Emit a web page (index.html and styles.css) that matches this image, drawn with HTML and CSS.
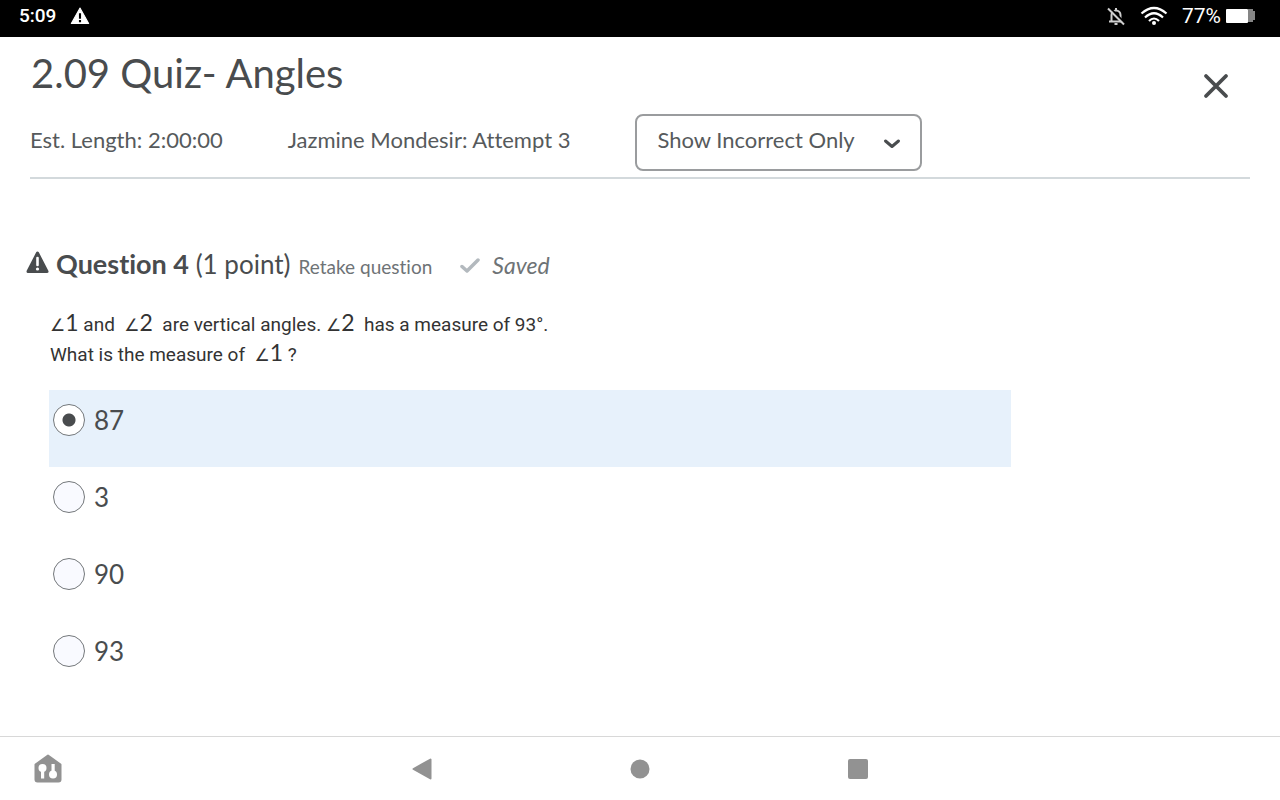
FILE: index.html
```html
<!DOCTYPE html>
<html lang="en">
<head>
<meta charset="utf-8">
<meta name="viewport" content="width=device-width, initial-scale=1">
<title>2.09 Quiz- Angles</title>
<link rel="stylesheet" href="styles.css">
</head>
<body>
<div class="status-bar">
  <div class="status-group">
    <span>5:09</span>
    <svg class="status-alert" width="20" height="18" viewBox="0 0 18 17" aria-hidden="true"><path d="M9 1 17.2 15.5H.8Z" fill="#fff" stroke="#fff" stroke-linejoin="round"/><path d="M9 6v5M9 12.300v2" stroke="#000" stroke-width="2"/></svg>
  </div>
  <div class="status-group status-right">
    <svg width="20" height="20" viewBox="0 0 20 20" fill="none" stroke="#cfcfcf" stroke-width="2" aria-hidden="true"><path d="M5.500 15V9a4.500 4.500 0 0 1 9 0v6M3 15.500h14M10 2v3M8.500 18h3"/><path d="M3.500 1.500 19 17" stroke="#000"/><path d="M2 2.500 18 18.500"/></svg>
    <svg class="wifi" width="28" height="20" viewBox="0 0 28 20" fill="none" stroke="#fff" stroke-width="2.200" aria-hidden="true"><path d="M1.500 7.500Q14-3.500 26.500 7.500M5 11.500Q14 3 23 11.500M9 15Q14 10 19 15"/><circle cx="14" cy="17" r="2" fill="#fff" stroke="none"/></svg>
    <span class="charge">77%</span>
    <svg class="battery" width="30" height="16" viewBox="0 0 30 16" aria-hidden="true"><path d="M22 1h5v2h2v9h-2v2h-5Z" fill="#858585"/><rect y="1" width="22" height="14" rx="1" fill="#fff"/></svg>
  </div>
</div>

<main class="page">
  <header class="quiz-header">
    <div class="title-row">
      <h1 class="title">2.09 Quiz- Angles</h1>
      <button class="close" type="button" aria-label="Close"><svg width="28" height="28" viewBox="0 0 28 28" aria-hidden="true"><path d="M4 4 24 24M24 4 4 24" stroke="#494c4e" stroke-width="3.800" stroke-linecap="round"/></svg></button>
    </div>
    <div class="meta">
      <span>Est. Length: 2:00:00</span>
      <span>Jazmine Mondesir: Attempt 3</span>
      <div class="filter">
        <select class="filter-select" aria-label="Questions shown"><option>Show Incorrect Only</option></select>
        <svg class="chevron" width="18" height="12" viewBox="0 0 18 12" fill="none" aria-hidden="true"><path d="M2.500 3 9 8.500 15.500 3" stroke="#494c4e" stroke-width="3" stroke-linecap="round" stroke-linejoin="round"/></svg>
      </div>
    </div>
  </header>

  <section class="question">
    <div class="question-head">
      <svg class="question-alert" width="23" height="23" viewBox="0 0 23 23" aria-hidden="true"><path d="M11.500 2 21 20.500H2Z" fill="#494c4e" stroke="#494c4e" stroke-width="3" stroke-linejoin="round"/><path d="M11.500 7v7" stroke="#fff" stroke-width="2.600" stroke-linecap="round"/><circle cx="11.500" cy="18" r="1.600" fill="#fff"/></svg>
      <h2 class="question-title"><strong>Question 4</strong> (1 point)</h2>
      <span class="retake">Retake question</span>
      <svg class="check" width="20" height="16" viewBox="0 0 20 16" fill="none" aria-hidden="true"><path d="M2 8.500 7 13 18 2" stroke="#b3b9be" stroke-width="3.500" stroke-linecap="round" stroke-linejoin="round"/></svg>
      <em class="saved">Saved</em>
    </div>
    <p class="prompt"><span class="math"><span class="angle">∠</span>1</span> and&nbsp; <span class="math"><span class="angle">∠</span>2</span>&nbsp; are vertical angles. <span class="math"><span class="angle">∠</span>2</span>&nbsp; has a measure of 93°.<br>What is the measure of&nbsp; <span class="math"><span class="angle">∠</span>1</span> ?</p>
    <div class="answers" role="radiogroup" aria-label="Question 4">
      <label class="answer"><input class="radio" type="radio" name="q4" checked><span>87</span></label>
      <label class="answer"><input class="radio" type="radio" name="q4"><span>3</span></label>
      <label class="answer"><input class="radio" type="radio" name="q4"><span>90</span></label>
      <label class="answer"><input class="radio" type="radio" name="q4"><span>93</span></label>
    </div>
  </section>
</main>

<nav class="nav-bar" aria-label="System">
  <button class="nav-button nav-home" type="button" aria-label="Smart home"><svg width="28" height="30" viewBox="0 0 28 30" aria-hidden="true"><path d="M14 1.500 26.500 10.500v15q0 2-2 2h-21q-2 0-2-2v-15Z" fill="#929292" stroke="#929292" stroke-width="2" stroke-linejoin="round"/><g fill="#fff"><circle cx="8.500" cy="14" r="4"/><path d="M7 15h3.200v9.500H7ZM17.500 10h3.200v10h-3.200Z"/><circle cx="19" cy="20.500" r="4"/></g></svg></button>
  <button class="nav-button" type="button" aria-label="Back"><svg width="22" height="24" viewBox="0 0 22 24" aria-hidden="true"><path d="M2.500 12 19.500 2.500v19Z" fill="#929292" stroke="#929292" stroke-width="2" stroke-linejoin="round"/></svg></button>
  <button class="nav-button" type="button" aria-label="Home"><svg width="22" height="22" viewBox="0 0 22 22" aria-hidden="true"><circle cx="11" cy="11" r="9.500" fill="#929292"/></svg></button>
  <button class="nav-button" type="button" aria-label="Recent apps"><svg width="22" height="22" viewBox="0 0 22 22" aria-hidden="true"><rect x="1" y="1" width="20" height="20" rx="2" fill="#929292"/></svg></button>
</nav>
</body>
</html>
```
FILE: styles.css
```css
* {
  box-sizing: border-box;
}

body {
  margin: 0;
  min-height: 100vh;
  display: flex;
  flex-direction: column;
  background: #fff;
  color: #494c4e;
  font-family: Lato, "Liberation Sans", sans-serif;
  font-size: 22px;
  font-variant-ligatures: none;
}

button {
  border: 0;
  padding: 0;
  background: none;
  display: flex;
}

.status-bar {
  display: flex;
  justify-content: space-between;
  align-items: center;
  padding: 0 24px 5px 19px;
  min-height: 37px;
  background: #000;
  color: #fff;
  font: 500 19px/32px Roboto, sans-serif;
}

.status-group {
  display: flex;
  align-items: center;
  gap: 14px;
}

.charge {
  font-size: 21px;
  font-weight: 400;
}

.battery {
  margin-left: -9px;
}

.page {
  flex: 1;
  padding: 0 30px;
}

.quiz-header {
  border-bottom: 2px solid #d3d9dc;
  padding-bottom: 6px;
}

.title-row {
  display: flex;
  justify-content: space-between;
  align-items: flex-start;
  padding: 11px 20px 0 1px;
}

.title {
  margin: 0;
  font-size: 40px;
  line-height: 50px;
  font-weight: 400;
}

.close {
  margin-top: 24px;
}

.meta {
  display: flex;
  align-items: center;
  gap: 65px;
  margin-top: 14px;
  line-height: 30px;
  color: #565a5c;
}

.meta > span {
  padding-bottom: 5px;
}

.filter {
  position: relative;
}

.filter-select {
  appearance: none;
  height: 57px;
  padding: 0 65px 5px 20px;
  border: 2px solid #9a9c9e;
  border-radius: 8px;
  background: #fff;
  color: inherit;
  font: inherit;
  font-variant-ligatures: none;
}

.chevron {
  position: absolute;
  right: 21px;
  top: 24px;
  pointer-events: none;
}

.question {
  padding-top: 67px;
}

.question-head {
  display: flex;
  align-items: baseline;
  margin-left: -4px;
  line-height: 36px;
}

.question-title {
  margin: 0 8px 0 7px;
  font-size: 26px;
  font-weight: 400;
}

.question-title strong {
  font-size: 27px;
}

.retake {
  color: #6e7376;
  font-size: 19px;
}

.check {
  margin: 0 12px 0 28px;
}

.saved {
  color: #6e7376;
  font-size: 23px;
}

.prompt {
  margin: 25px 20px 20px;
  color: #333;
  font: 19px/30px Roboto, sans-serif;
}

.math {
  font: 23px/1 Lato, sans-serif;
}

.angle {
  font-family: "DejaVu Sans", sans-serif;
  font-size: 17px;
}

.answers {
  margin: 0 19px;
  max-width: 962px;
}

.answer {
  display: flex;
  align-items: flex-start;
  gap: 9px;
  min-height: 77px;
  padding: 14px 4px;
  font-size: 26px;
  line-height: 32px;
}

.answer:has(:checked) {
  background: #e7f1fb;
}

.radio {
  appearance: none;
  flex: none;
  width: 32px;
  height: 32px;
  margin: 0;
  border: 1px solid #74787b;
  border-radius: 50%;
  background: #f9faff;
}

.radio:checked {
  background: radial-gradient(circle, #494c4e 6px, #fff 7px);
}

.nav-bar {
  display: grid;
  grid-template-columns: 1fr 17% 17% 17% 1fr;
  align-items: center;
  justify-items: center;
  height: 64px;
  border-top: 1px solid #d8d8d8;
}

.nav-home {
  justify-self: start;
  margin-left: 34px;
}
```
